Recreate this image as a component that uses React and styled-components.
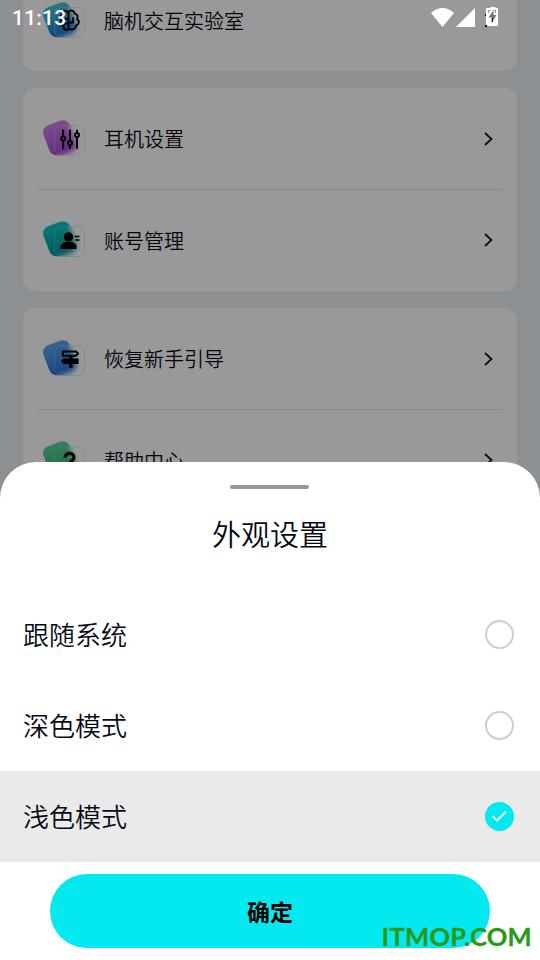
import React, { useState } from 'react';
import styled, { createGlobalStyle } from 'styled-components';

const GlobalStyle = createGlobalStyle`
  * { box-sizing: border-box; }
  body {
    margin: 0;
    overflow: hidden;
    font-family: 'Noto Sans CJK SC', sans-serif;
    font-weight: 350;
    color: #060a12;
  }
`;

const Screen = styled.div`
  position: relative;
  width: 540px;
  height: 960px;
  overflow: hidden;
  background: #e9f1f6;
`;

// settings page behind the sheet
const SettingsPage = styled.main`
  display: flex;
  flex-direction: column;
  gap: 17px;
  margin-top: -29px;
  padding: 0 23px;
`;

const Card = styled.section`
  padding: 0 14px;
  border-radius: 13px;
  background: #fff;
`;

const SettingRow = styled.div`
  display: flex;
  align-items: center;
  height: 102px;
  padding: 0 6px;
  &:only-child {
    height: 100px;
  }
  & + & {
    height: 101px;
    box-shadow: 0 -1px 0 #e3e8ea;
  }
`;

const RowIcon = styled.svg`
  flex: none;
  width: 44px;
  height: 40px;
  margin-right: 17px;
  margin-bottom: 3px;
`;

const RowLabel = styled.span`
  flex: 1;
  font-size: 20px;
  line-height: 30px;
`;

const Chevron = styled.svg`
  width: 12px;
  height: 18px;
  margin-right: 2px;
  margin-bottom: 1px;
`;

const Scrim = styled.div`
  position: absolute;
  inset: 0;
  background: rgba(0, 0, 0, 0.4);
`;

const StatusBar = styled.header`
  position: absolute;
  top: 0;
  left: 0;
  right: 0;
  display: flex;
  align-items: center;
  justify-content: space-between;
  height: 34px;
  padding: 0 40px 0 12px;
  color: #fff;
`;

const Clock = styled.span`
  padding-top: 2px;
  font: 500 21px/34px Roboto, sans-serif;
  letter-spacing: 0.2px;
`;

const Sheet = styled.div`
  position: absolute;
  left: 0;
  right: 0;
  bottom: 0;
  display: flex;
  flex-direction: column;
  align-items: center;
  height: 498px;
  padding-top: 23px;
  border-radius: 36px 36px 0 0;
  background: #fff;
`;

const Handle = styled.div`
  width: 79px;
  height: 4px;
  margin-right: 1px;
  border-radius: 2px;
  background: #969896;
`;

const Title = styled.h2`
  margin: 22px 0 33px;
  font-size: 29px;
  font-weight: 350;
  line-height: 45px;
`;

const Options = styled.div`
  width: 100%;
`;

const Option = styled.div`
  display: flex;
  align-items: center;
  justify-content: space-between;
  height: 91px;
  padding: 0 26px 0 23px;
  background: ${(props) => (props.$selected ? '#eaeaea' : '#fff')};
`;

const OptionLabel = styled.span`
  padding-bottom: 2px;
  font-size: 26px;
  line-height: 38px;
`;

const Radio = styled.span`
  display: flex;
  align-items: center;
  justify-content: center;
  width: 29.5px;
  height: 29.5px;
  border: ${(props) => (props.$selected ? 'none' : '2px solid #cbced6')};
  border-radius: 50%;
  background: ${(props) => (props.$selected ? '#04e9f0' : 'transparent')};
`;

const ConfirmButton = styled.button`
  width: 440px;
  height: 74px;
  margin-top: 12px;
  padding: 0 0 1px;
  border: none;
  border-radius: 37px;
  background: #04e9f0;
  color: #000;
  font: 700 23px/34px 'Noto Sans CJK SC', sans-serif;
`;

const Watermark = styled.span`
  position: absolute;
  right: 8px;
  bottom: 6px;
  color: #2a9a16;
  font: 700 25.5px/36px Lato, sans-serif;
  letter-spacing: 0.3px;
  -webkit-text-stroke: 0.3px #2a9a16;
`;

const BrainGlyph = () => (
  <g
    fill="none"
    stroke="#000"
    strokeWidth="1.8"
    strokeLinecap="round"
    strokeLinejoin="round"
    transform="translate(-1.5 0.5)"
  >
    <path d="M26.5 12.5c-1-3.500-6-2.500-5.500 1-3 1-3 5-1 6-2 3 0 6 2 6 0 4.500 4.500 5.500 5 2V12c1-3 6-2.500 6 1 3 1 4 3 2.500 5.500 3 2 2 6-1 6.500 0 4-5.500 5.500-7.500 2.500" />
    <path d="M22.500 18.500h4M27 22h4.500v-4.500M22.500 24l4-1.500" />
  </g>
);

const SlidersGlyph = () => (
  <g fill="none" stroke="#000" strokeWidth="1.9" strokeLinecap="round">
    <path d="M20.200 12.500v5M20.200 23v7M27 12.500v10M27 27.500v2.500M34 12.500v2M34 19.500v10.500" />
    <circle cx="20.200" cy="20.500" r="2" />
    <circle cx="27" cy="25" r="2" />
    <circle cx="34" cy="17" r="2" />
  </g>
);

const UserGlyph = () => (
  <g>
    <circle cx="25.500" cy="18" r="4.700" />
    <path d="M17.500 30v-2c0-3.500 3-5 8-5s8 1.500 8 5v2z" />
    <path d="M31.500 17.500h5M32.500 21h4" stroke="#000" strokeWidth="1.600" />
  </g>
);

const SignGlyph = () => (
  <g>
    <path d="M20 13.500h13l2 2-2 2.300H20z" fill="none" stroke="#000" strokeWidth="2" />
    <path d="M18 23l2.500-2.500H35.500v5.500H20.500z" />
    <path d="M26 17.500h3.500V30H26z" />
  </g>
);

const QuestionGlyph = () => (
  <path
    d="M22 18.500c.5-5.500 9-5.500 9 0 0 3-4.500 3-4.500 7v3"
    fill="none"
    stroke="#000"
    strokeWidth="3.200"
  />
);

const glyphs = {
  brain: BrainGlyph,
  sliders: SlidersGlyph,
  user: UserGlyph,
  sign: SignGlyph,
  question: QuestionGlyph,
};

// tilted coloured tile with a frosted plate and a glyph on it
const TileIcon = ({ name, from, to }) => {
  const Glyph = glyphs[name];
  return (
    <RowIcon viewBox="0 0 44 40">
      <defs>
        <linearGradient id={`${name}-tile`} x1="0.5" y1="0" x2="0.5" y2="1">
          <stop offset="0" stopColor={from} />
          <stop offset="1" stopColor={to} />
        </linearGradient>
        <clipPath id={`${name}-clip`}>
          <rect x="11.500" y="7.500" width="30" height="30" rx="7" />
        </clipPath>
        <filter id={`${name}-blur`} x="-30%" y="-30%" width="160%" height="160%">
          <feGaussianBlur stdDeviation="2.8" />
        </filter>
      </defs>
      <rect
        x="2.500"
        y="4"
        width="28"
        height="31.500"
        rx="7.500"
        transform="rotate(-21 16.500 19.500)"
        fill={`url(#${name}-tile)`}
      />
      <g clipPath={`url(#${name}-clip)`}>
        <rect x="11" y="7" width="31" height="31" fill="#fff" />
        <rect
          x="1"
          y="4"
          width="29"
          height="33"
          rx="7"
          transform="rotate(-21 16.500 19.500)"
          fill={`url(#${name}-tile)`}
          filter={`url(#${name}-blur)`}
        />
      </g>
      <rect
        x="11.500"
        y="7.500"
        width="30"
        height="30"
        rx="7"
        fill="none"
        stroke={from}
        strokeOpacity="0.25"
      />
      <Glyph />
    </RowIcon>
  );
};

const groups = [
  [{ name: 'brain', label: '脑机交互实验室', from: '#43cbd6', to: '#1a70d2', chevron: false }],
  [
    { name: 'sliders', label: '耳机设置', from: '#cf83ee', to: '#a04ad2' },
    { name: 'user', label: '账号管理', from: '#08cccc', to: '#078f9c' },
  ],
  [
    { name: 'sign', label: '恢复新手引导', from: '#58a8f0', to: '#2570d4' },
    { name: 'question', label: '帮助中心', from: '#5bd29a', to: '#2fae74' },
  ],
];

const options = ['跟随系统', '深色模式', '浅色模式'];

export default function App() {
  const [selected, setSelected] = useState(2);

  return (
    <Screen>
      <GlobalStyle />
      <SettingsPage>
        {groups.map((rows) => (
          <Card key={rows[0].name}>
            {rows.map((row) => (
              <SettingRow key={row.name}>
                <TileIcon name={row.name} from={row.from} to={row.to} />
                <RowLabel>{row.label}</RowLabel>
                {row.chevron !== false && (
                  <Chevron viewBox="0 0 12 18">
                    <path d="M2 3l6.500 6L2 15" fill="none" stroke="#10161c" strokeWidth="1.800" />
                  </Chevron>
                )}
              </SettingRow>
            ))}
          </Card>
        ))}
      </SettingsPage>
      <Scrim />
      <StatusBar>
        <Clock>11:13</Clock>
        <svg width="69" height="34" viewBox="0 0 69 34" fill="#fff">
          <path d="M0 13q11.500-10 23 0L11.500 27z" />
          <path d="M44 8v19H25z" />
          <path d="M57 8h2.500V7h5v1H66q1 0 1 1v16q0 1-1 1H56q-1 0-1-1V9q0-1 1-1z" />
          <path d="M57 10h2.500v1H58v2h-1zM65 10h-2.500v1H64v2h1z" fill="#999" />
          <path d="M62.500 10l-5 7.500h3V23l5-8h-3z" fill="#777" />
          <path d="M54 14h1v2h-1zM54 25h2v2h-2zM61 18h1v4h-1z" fill="#111" />
        </svg>
      </StatusBar>
      <Sheet>
        <Handle />
        <Title>外观设置</Title>
        <Options>
          {options.map((label, i) => (
            <Option key={label} $selected={i === selected} onClick={() => setSelected(i)}>
              <OptionLabel>{label}</OptionLabel>
              <Radio $selected={i === selected}>
                {i === selected && (
                  <svg width="29" height="29" viewBox="0 0 29 29">
                    <path d="M7.500 14l4.500 4.500 9-9" fill="none" stroke="#e4f4f4" strokeWidth="2" />
                  </svg>
                )}
              </Radio>
            </Option>
          ))}
        </Options>
        <ConfirmButton>确定</ConfirmButton>
      </Sheet>
      <Watermark>ITMOP.COM</Watermark>
    </Screen>
  );
}
